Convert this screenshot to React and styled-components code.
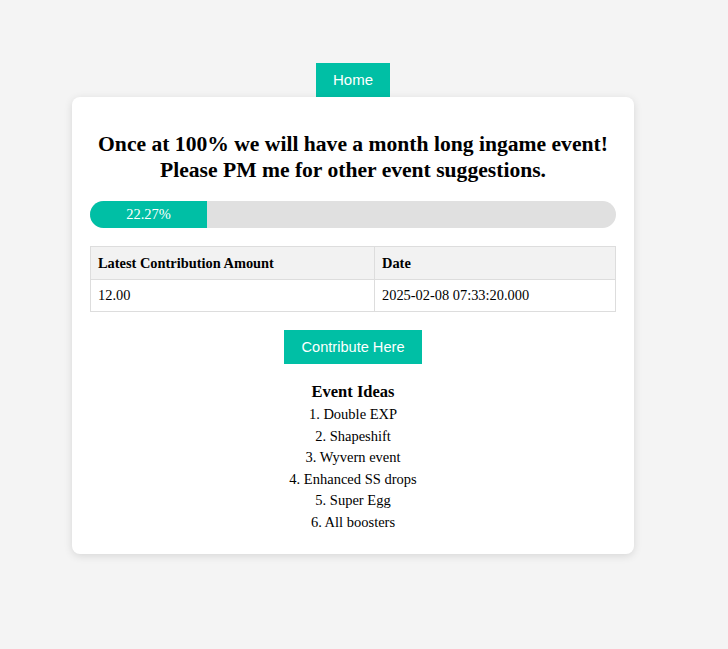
import React from 'react';
import styled, { createGlobalStyle } from 'styled-components';

const GlobalStyle = createGlobalStyle`
    html, body {
        margin: 0;
        padding: 0;
        background: #f4f4f4;
        font-family: "Liberation Serif", "Times New Roman", serif;
        color: #000;
    }
`;

const Page = styled.div`
    min-height: 649px;
    padding: 63px 0 0 72px;
    box-sizing: border-box;
`;

const Wrapper = styled.div`
    width: 562px;
    display: flex;
    flex-direction: column;
    align-items: center;
`;

const Button = styled.a`
    display: inline-block;
    box-sizing: border-box;
    background: #00bfa5;
    color: #fff;
    font-family: "Liberation Sans", Arial, sans-serif;
    font-size: ${p => p.$size || 15}px;
    line-height: 34px;
    height: 34px;
    width: ${p => p.$w}px;
    text-align: center;
    text-decoration: none;
    cursor: pointer;
`;

const Card = styled.div`
    width: 100%;
    box-sizing: border-box;
    background: #fff;
    border-radius: 8px;
    box-shadow: 0 2px 8px rgba(0, 0, 0, 0.12);
    padding: 34px 18px 20px;
    display: flex;
    flex-direction: column;
    align-items: center;
`;

const Title = styled.h2`
    margin: 0 0 18px;
    font-size: 21.6px;
    line-height: 26px;
    text-align: center;
    font-weight: bold;
`;

const Bar = styled.div`
    width: 100%;
    height: 27px;
    border-radius: 14px;
    background: #e0e0e0;
    overflow: hidden;
    display: flex;
`;

const Fill = styled.div`
    height: 100%;
    background: #00bfa5;
    color: #fff;
    font-size: 14.5px;
    display: flex;
    align-items: center;
    justify-content: center;
`;

const Table = styled.table`
    width: 100%;
    margin: 18px 0;
    border-collapse: collapse;
    font-size: 14.4px;
    line-height: 17px;
`;

const Th = styled.th`
    background: #f2f2f2;
    border: 1px solid #ddd;
    padding: 8px 7px 7px;
    text-align: left;
`;

const Td = styled.td`
    border: 1px solid #ddd;
    padding: 7px 7px 7px;
    text-align: left;
`;

const IdeasTitle = styled.h3`
    margin: 18px 0 2px;
    font-size: 16.5px;
    line-height: 20px;
`;

const IdeaList = styled.div`
    text-align: center;
    font-size: 14.5px;
    line-height: 21.6px;
`;

const ideas = [
    'Double EXP',
    'Shapeshift',
    'Wyvern event',
    'Enhanced SS drops',
    'Super Egg',
    'All boosters',
];

const App = () => {
    const percent = 22.27;
    return (
        <React.Fragment>
            <GlobalStyle />
            <Page>
                <Wrapper>
                    <Button $w={74}>Home</Button>
                    <Card>
                        <Title>
                            Once at 100% we will have a month long ingame event!<br />
                            Please PM me for other event suggestions.
                        </Title>
                        <Bar>
                            <Fill style={{ width: `${percent}%` }}>{percent}%</Fill>
                        </Bar>
                        <Table>
                            <thead>
                                <tr>
                                    <Th style={{ width: '269px' }}>Latest Contribution Amount</Th>
                                    <Th>Date</Th>
                                </tr>
                            </thead>
                            <tbody>
                                <tr>
                                    <Td>12.00</Td>
                                    <Td>2025-02-08 07:33:20.000</Td>
                                </tr>
                            </tbody>
                        </Table>
                        <Button $w={138} $size={14.6}>Contribute Here</Button>
                        <IdeasTitle>Event Ideas</IdeasTitle>
                        <IdeaList>
                            {ideas.map((idea, index) => (
                                <div key={index}>{index + 1}. {idea}</div>
                            ))}
                        </IdeaList>
                    </Card>
                </Wrapper>
            </Page>
        </React.Fragment>
    );
}

export default App;
